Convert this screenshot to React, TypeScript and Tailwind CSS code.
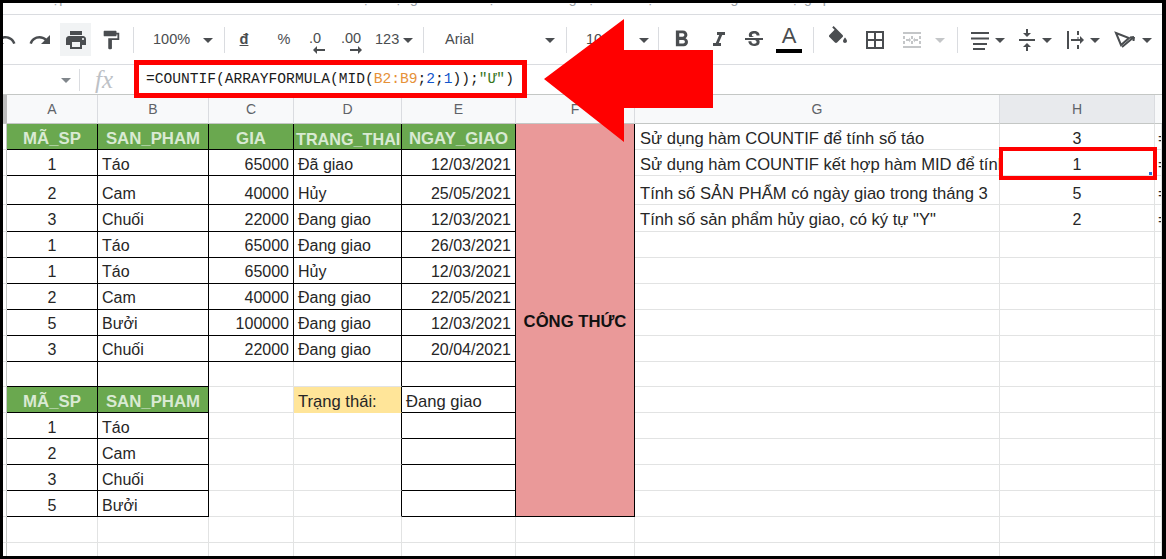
import {
  MdUndo,
  MdRedo,
  MdPrint,
  MdFormatPaint,
  MdFormatBold,
  MdFormatItalic,
  MdStrikethroughS,
  MdBorderAll,
  MdVerticalAlignCenter,
  MdArrowDropDown,
} from "react-icons/md";

const products = [
  ["1", "Táo", "65000", "Đã giao", "12/03/2021"],
  ["2", "Cam", "40000", "Hủy", "25/05/2021"],
  ["3", "Chuối", "22000", "Đang giao", "12/03/2021"],
  ["1", "Táo", "65000", "Đang giao", "26/03/2021"],
  ["1", "Táo", "65000", "Hủy", "12/03/2021"],
  ["2", "Cam", "40000", "Đang giao", "22/05/2021"],
  ["5", "Bưởi", "100000", "Đang giao", "12/03/2021"],
  ["3", "Chuối", "22000", "Đang giao", "20/04/2021"],
];

const stock = [
  ["1", "Táo"],
  ["2", "Cam"],
  ["3", "Chuối"],
  ["5", "Bưởi"],
];

const columns = ["A", "B", "C", "D", "E", "F", "G", "H"];

function Cell({ children, className = "" }: { children?: React.ReactNode; className?: string }) {
  return (
    <div
      className={`flex items-end overflow-hidden whitespace-nowrap border-r border-b border-[#e2e3e3] leading-[20px] ${className}`}
    >
      {children}
    </div>
  );
}

function Gutter() {
  return <div className="border-r border-b border-r-[#c4c7c5] border-b-[#e2e3e3] bg-white" />;
}

function Sep() {
  return <div className="h-[26px] w-[1px] shrink-0 bg-[#dadce0]" />;
}

function Caret({ className = "" }: { className?: string }) {
  return (
    <span className={`flex w-[16px] shrink-0 justify-center ${className}`}>
      <MdArrowDropDown size={24} className="shrink-0" />
    </span>
  );
}

// dòng G, H, I bên phải bảng
function SideCells({ text, value, pad = "" }: { text: string; value: string; pad?: string }) {
  return (
    <>
      <Cell className={`pl-[5px] text-[16.6px] ${pad}`}>{text}</Cell>
      <Cell className={`justify-center ${pad}`}>{value}</Cell>
      <Cell className={`pl-[3px] ${pad}`}>{text ? "=COUNTIF" : ""}</Cell>
    </>
  );
}

const green = "justify-center bg-[#6aa84f] text-[16.8px] font-bold text-[#d9ead3] border-r-black border-b-black";

export default function App() {
  return (
    <div className="relative flex h-[559px] w-[1166px] flex-col overflow-hidden border-t-[3px] border-r-[4px] border-b-[3px] border-l-[3px] border-black bg-white font-['Liberation_Sans',sans-serif] text-[16px] text-[#262626]">
      {/* menu, gần như bị cắt hết */}
      <div className="h-[12px] shrink-0 overflow-hidden border-b border-[#dadce0]">
        <div className="mt-[-14px] flex gap-[40px] pl-[40px] text-[14px] leading-[18px] text-[#9aa0a6]">
          <span>Tệp</span>
          <span>Chỉnh sửa</span>
          <span>Xem</span>
          <span>Chèn</span>
          <span>Định dạng</span>
          <span>Dữ liệu</span>
          <span>Công cụ</span>
          <span>Tiện ích bổ sung</span>
          <span>Trợ giúp</span>
          <span>Lần chỉnh sửa cuối</span>
        </div>
      </div>

      {/* toolbar */}
      <div className="flex h-[50px] shrink-0 items-center border-b border-[#dadce0] text-[14.5px] text-[#4a4d50]">
        <span className="ml-[-9px] flex w-[22px] shrink-0 justify-center">
          <MdUndo size={24} className="shrink-0" />
        </span>
        <span className="ml-[8px] flex w-[32px] shrink-0 justify-center">
          <MdRedo size={24} />
        </span>
        <span className="ml-[4px] flex h-[33px] w-[31px] shrink-0 items-center justify-center bg-[#f1f3f4]">
          <MdPrint size={24} />
        </span>
        <span className="ml-[5px] flex w-[30px] shrink-0 justify-center">
          <MdFormatPaint size={22} />
        </span>
        <span className="ml-[7px]">
          <Sep />
        </span>
        <span className="ml-[19px] w-[37px] shrink-0">100%</span>
        <Caret className="ml-[10px]" />
        <span className="ml-[8px]">
          <Sep />
        </span>
        <span className="ml-[9px] w-[20px] shrink-0 text-center font-bold underline">đ</span>
        <span className="ml-[20px] w-[20px] shrink-0 text-center">%</span>
        <span className="ml-[9px] flex h-[28px] w-[24px] shrink-0 flex-col items-center justify-end leading-[16px]">
          <span>.0</span>
          <svg viewBox="0 0 12 8" className="ml-[8px] h-[8px] w-[12px] shrink-0 fill-current">
            <path d="M4 0v3h8v2H4v3L0 4z" />
          </svg>
        </span>
        <span className="ml-[10px] flex h-[28px] w-[28px] shrink-0 flex-col items-center justify-end leading-[16px]">
          <span>.00</span>
          <svg viewBox="0 0 12 8" className="ml-[10px] h-[8px] w-[12px] shrink-0 fill-current">
            <path d="M8 0v3H0v2h8v3l4-4z" />
          </svg>
        </span>
        <span className="ml-[10px] w-[24px] shrink-0">123</span>
        <Caret className="ml-[1px]" />
        <span className="ml-[7px]">
          <Sep />
        </span>
        <span className="ml-[21px] w-[32px] shrink-0">Arial</span>
        <Caret className="ml-[65px]" />
        <span className="ml-[8px]">
          <Sep />
        </span>
        <span className="ml-[19px] w-[16px] shrink-0">10</span>
        <Caret className="ml-[34px]" />
        <span className="ml-[6px]">
          <Sep />
        </span>
        <MdFormatBold size={27} className="ml-[9px] shrink-0" />
        <MdFormatItalic size={24} className="ml-[12px] shrink-0" />
        <MdStrikethroughS size={24} className="ml-[11px] shrink-0" />
        <span className="ml-[9px] flex w-[28px] shrink-0 flex-col items-center">
          <span className="text-[22px] leading-[20px]">A</span>
          <span className="mt-[3px] h-[4px] w-[26px] bg-black" />
        </span>
        <span className="ml-[10px]">
          <Sep />
        </span>
        <svg viewBox="0 0 24 24" className="ml-[12px] mt-[-4px] h-[24px] w-[24px] shrink-0 fill-current">
          <path d="M16.56 8.94 7.62 0 6.21 1.41l2.38 2.38-5.15 5.15c-.59.59-.59 1.54 0 2.12l5.5 5.5c.29.29.68.44 1.06.44s.77-.15 1.06-.44l5.5-5.5c.59-.58.59-1.53 0-2.12zM19 11.5s-2 2.17-2 3.5c0 1.1.9 2 2 2s2-.9 2-2c0-1.33-2-3.5-2-3.5z" />
        </svg>
        <MdBorderAll size={24} className="ml-[13px] shrink-0" />
        <svg viewBox="0 0 24 24" className="ml-[13px] h-[24px] w-[24px] shrink-0 fill-[#c4c6c8]">
          <path d="M3 4h18v2H3zM3 18h18v2H3zM3 8h2v3H3zM3 13h2v3H3zM19 8h2v3h-2zM19 13h2v3h-2zM11 8h2v3h-2zM11 13h2v3h-2zM6 11h3V9.5l2 2.5-2 2.5V13H6zM18 11h-3V9.5L13 12l2 2.5V13h3z" />
        </svg>
        <Caret className="ml-[8px] text-[#c4c6c8]" />
        <span className="ml-[9px]">
          <Sep />
        </span>
        <svg viewBox="0 0 24 24" className="ml-[10px] h-[24px] w-[24px] shrink-0 fill-current">
          <path d="M3 4h18v2H3zM3 9.5h18v2H3zM5 15h14v2H5zM5 20h12v2H5z" />
        </svg>
        <Caret />
        <MdVerticalAlignCenter size={24} className="ml-[7px] shrink-0" />
        <Caret />
        <svg viewBox="0 0 24 24" className="ml-[8px] h-[24px] w-[24px] shrink-0 fill-current">
          <path d="M4 3h2v18H4zM14 3h2v4h-2zM14 9.5h2v1h-2zM14 17h2v4h-2zM8 11h9V8l4 4-4 4v-3H8z" />
        </svg>
        <Caret />
        <svg viewBox="0 0 24 24" className="ml-[10px] h-[24px] w-[24px] shrink-0 fill-none stroke-current stroke-2">
          <path d="M3 5l13 5-8 7z" />
          <path d="M9 19L21 9M21 9l-4 .5M21 9l-.5 4" />
        </svg>
        <Caret className="ml-[2px]" />
      </div>

      {/* formula bar */}
      <div className="flex h-[30px] shrink-0 items-center border-b border-[#c4c7c5] text-[#5f6368]">
        <Caret className="ml-[55px] text-[#80868b]" />
        <span className="ml-[5px] h-[22px] w-[1px] shrink-0 bg-[#dadce0]" />
        <span className="ml-[15px] w-[22px] shrink-0 font-['Liberation_Serif',serif] text-[25px] italic leading-[24px] text-[#bdc1c6]">
          fx
        </span>
        <span className="ml-[29px] whitespace-nowrap font-['Liberation_Mono',monospace] text-[14.6px] text-[#1b1b1b]">
          =COUNTIF(ARRAYFORMULA(MID(<span className="text-[#e69138]">B2:B9</span>;
          <span className="text-[#1155cc]">2</span>;<span className="text-[#1155cc]">1</span>));
          <span className="text-[#38761d]">"Ư"</span>)
        </span>
      </div>

      {/* sheet */}
      <div className="grid min-h-0 flex-1 grid-cols-[4px_91px_111px_85px_108px_114px_119px_365px_155px_7px] grid-rows-[29px_26px_26px_29px_27px_26px_26px_26px_26px_26px_25px_26px_26px_26px_26px_26px_26px_26px] overflow-hidden">
        {/* tiêu đề cột */}
        <div className="border-b border-[#c4c7c5] bg-[#bdbdbd]" />
        {columns.map((c) => (
          <div
            key={c}
            className={`flex items-center justify-center border-r border-b border-r-[#dadce0] border-b-[#c4c7c5] text-[14px] text-[#5f6368] ${
              c === "H" ? "bg-[#e8eaed]" : "bg-[#f8f9fa]"
            }`}
          >
            {c}
          </div>
        ))}
        <div className="border-b border-[#c4c7c5] bg-[#f8f9fa]" />

        {/* hàng tiêu đề bảng */}
        <Gutter />
        <Cell className={green}>MÃ_SP</Cell>
        <Cell className={green}>SAN_PHAM</Cell>
        <Cell className={green}>GIA</Cell>
        <Cell className={`${green} !justify-start !text-[16.2px] pl-[2px]`}>TRANG_THAI</Cell>
        <Cell className={green}>NGAY_GIAO</Cell>
        <Cell className="row-span-15 !items-center justify-center bg-[#ea9999] pt-[3px] text-[16.7px] font-bold text-[#111111] border-r-black border-b-black">
          CÔNG THỨC
        </Cell>
        <SideCells text="Sử dụng hàm COUNTIF để tính số táo" value="3" />

        {/* bảng sản phẩm */}
        {products.map((p, i) => {
          const pad = i > 1 ? "pb-[1px]" : "";
          return (
            <div key={i} className="contents">
              <Gutter />
              <Cell className={`justify-center border-r-black border-b-black ${pad}`}>{p[0]}</Cell>
              <Cell className={`pl-[4px] border-r-black border-b-black ${pad}`}>{p[1]}</Cell>
              <Cell className={`justify-end pr-[4px] border-r-black border-b-black ${pad}`}>{p[2]}</Cell>
              <Cell className={`pl-[4px] border-r-black border-b-black ${pad}`}>{p[3]}</Cell>
              <Cell className={`justify-end pr-[4px] border-r-black border-b-black ${pad}`}>{p[4]}</Cell>
              {i === 0 && <SideCells text="Sử dụng hàm COUNTIF kết hợp hàm MID để tính số sản phẩm" value="1" />}
              {i === 1 && <SideCells text="Tính số SẢN PHẨM có ngày giao trong tháng 3" value="5" />}
              {i === 2 && <SideCells text={'Tính số sản phẩm hủy giao, có ký tự "Y"'} value="2" pad="pb-[1px]" />}
              {i > 2 && <SideCells text="" value="" />}
            </div>
          );
        })}

        {/* hàng trống */}
        <Gutter />
        <Cell className="border-r-black border-b-black" />
        <Cell className="border-r-black border-b-black" />
        <Cell />
        <Cell className="border-r-black" />
        <Cell className="border-r-black border-b-black" />
        <SideCells text="" value="" />

        {/* bảng thứ hai */}
        <Gutter />
        <Cell className={green}>MÃ_SP</Cell>
        <Cell className={green}>SAN_PHAM</Cell>
        <Cell />
        <Cell className="bg-[#ffe599] pl-[4px] text-[16.6px] border-r-black border-b-[#ffe599]">Trạng thái:</Cell>
        <Cell className="pl-[4px] text-[16.6px] border-r-black border-b-black">Đang giao</Cell>
        <SideCells text="" value="" />
        {stock.map((s) => (
          <div key={s[0]} className="contents">
            <Gutter />
            <Cell className="justify-center border-r-black border-b-black">{s[0]}</Cell>
            <Cell className="pl-[4px] border-r-black border-b-black">{s[1]}</Cell>
            <Cell />
            <Cell className="border-r-black" />
            <Cell className="border-r-black border-b-black" />
            <SideCells text="" value="" />
          </div>
        ))}

        {/* hai hàng cuối */}
        {[0, 1].map((r) => (
          <div key={r} className="contents">
            <Gutter />
            <Cell />
            <Cell />
            <Cell />
            <Cell />
            <Cell />
            <Cell />
            <SideCells text="" value="" />
          </div>
        ))}
      </div>

      {/* các chú thích đỏ đè lên màn hình */}
      <div className="absolute left-[131px] top-[57px] h-[38px] w-[393px] border-[5px] border-[#ff0000]" />
      <div className="absolute left-[996px] top-[144px] h-[33px] w-[158px] border-[4px] border-[#ff0000]">
        <div className="absolute bottom-[1px] right-[1px] h-[3px] w-[3px] bg-[#2a6fd6]" />
      </div>
      <svg className="absolute left-[541px] top-[16px] h-[123px] w-[169px]" viewBox="0 0 169 123">
        <path d="M0 60 80 0V31H169V89H80V123Z" fill="#ff0000" />
      </svg>
    </div>
  );
}
